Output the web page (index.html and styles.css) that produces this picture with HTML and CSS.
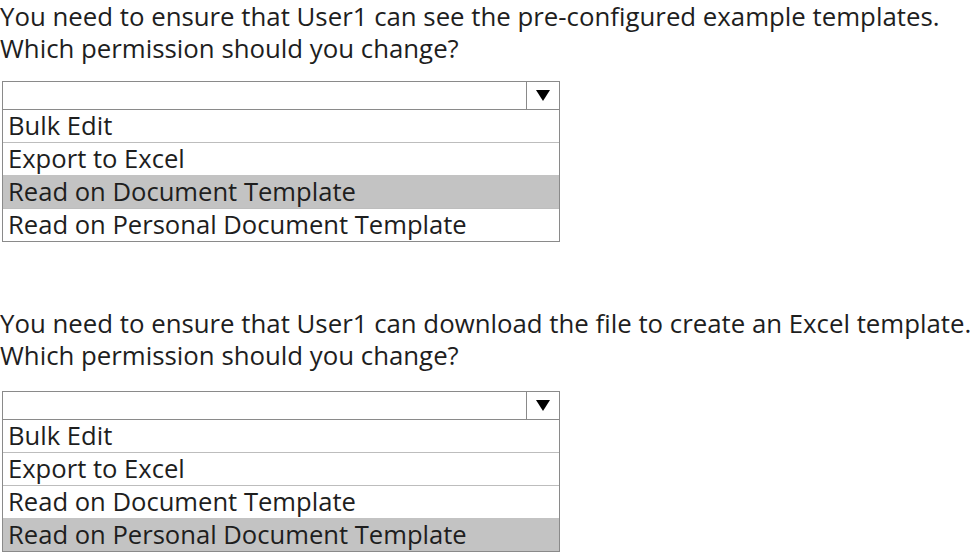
FILE: index.html
```html
<!DOCTYPE html>
<html>
<head>
  <title>Permissions</title>
  <link rel="stylesheet" href="styles.css">
</head>
<body>
  <div class="question">
    <p class="prompt">You need to ensure that User1 can see the pre-configured example templates.<br>Which permission should you change?</p>
    <div class="dropdown">
      <div class="head">
        <div class="value"></div>
        <div class="arrow"><span class="tri"></span></div>
      </div>
      <div class="option">Bulk Edit</div>
      <div class="option">Export to Excel</div>
      <div class="option selected">Read on Document Template</div>
      <div class="option">Read on Personal Document Template</div>
    </div>
  </div>

  <div class="question second">
    <p class="prompt">You need to ensure that User1 can download the file to create an Excel template.<br>Which permission should you change?</p>
    <div class="dropdown">
      <div class="head">
        <div class="value"></div>
        <div class="arrow"><span class="tri"></span></div>
      </div>
      <div class="option">Bulk Edit</div>
      <div class="option">Export to Excel</div>
      <div class="option">Read on Document Template</div>
      <div class="option selected">Read on Personal Document Template</div>
    </div>
  </div>
</body>
</html>
```

FILE: styles.css
```css
body {
  margin: 0;
  background: #fff;
  color: #1e1e1e;
  font-family: "Open Sans", "Noto Sans", sans-serif;
}

.prompt {
  margin: 0;
  font-size: 25.8px;
  line-height: 32px;
  white-space: nowrap;
}

.dropdown {
  width: 556px;
  margin: 17px 0 0 2px;
  border: 1px solid #8a8a8a;
  font-size: 25.6px;
}

.second {
  margin-top: 65px;
}

.second .dropdown {
  margin-top: 20px;
}

.head {
  display: flex;
  height: 27px;
  border-bottom: 1px solid #8a8a8a;
}

.head .value {
  flex: 1;
}

.head .arrow {
  width: 32px;
  border-left: 1px solid #8a8a8a;
  display: flex;
  align-items: center;
  justify-content: center;
}

.tri {
  width: 0;
  height: 0;
  border-left: 7px solid transparent;
  border-right: 7px solid transparent;
  border-top: 11px solid #000;
}

.option {
  height: 32px;
  line-height: 32px;
  padding-left: 5px;
  border-top: 1px solid #bdbdbd;
  white-space: nowrap;
}

.head + .option {
  border-top: none;
}

.option.selected {
  background: #c3c3c3;
  border-top-color: #c3c3c3;
}
```
